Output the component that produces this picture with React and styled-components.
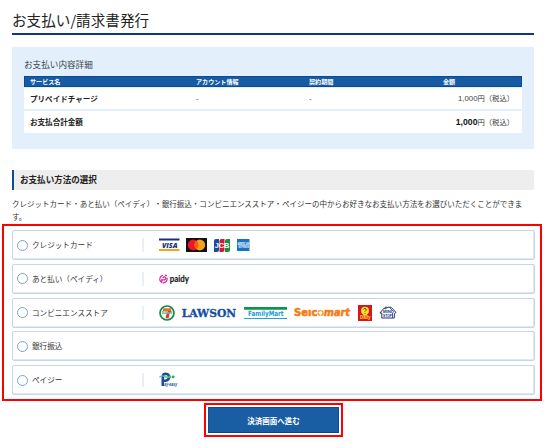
import React from "react";
import styled, { createGlobalStyle } from "styled-components";

const GlobalStyle = createGlobalStyle`
  * { box-sizing: border-box; }
  body {
    margin: 0;
    background: #fff;
    color: #333;
    font-family: "Noto Sans CJK JP", sans-serif;
    text-spacing-trim: space-all;
  }
`;

const Page = styled.main`
  width: 550px;
  height: 448px;
  overflow: hidden;
`;

const Content = styled.div`
  width: 522px;
  margin-left: 12px;
`;

const Title = styled.h1`
  margin: 0;
  height: 35px;
  padding-top: 9px;
  border-bottom: 2px solid #12348c;
  font-size: 14.6px;
  font-weight: 400;
  line-height: 21px;
  color: #222;
`;

const Detail = styled.section`
  height: 102px;
  margin-top: 12px;
  padding: 11px 12px 0;
  background: #e3effa;
`;

const DetailTitle = styled.h2`
  margin: 0 0 6px;
  font-size: 8.6px;
  font-weight: 400;
  line-height: 12px;
  color: #3c4650;
`;

const Row = styled.div`
  display: grid;
  grid-template-columns: 166px 113px 134px 1fr;
  align-items: center;
  width: 498px;
  height: ${(p) => p.$height}px;
  margin-bottom: ${(p) => p.$gap || 0}px;
  padding: 0 11px 0 6px;
  background: #fff;
  font-size: 7.55px;
  line-height: 12px;
`;

const HeadRow = styled(Row)`
  background: #175ca3;
  border: 1px solid #084a94;
  padding-left: 5px;
  color: #fff;
  font-size: 6.1px;
  font-weight: 700;
  line-height: 9px;
`;

const Name = styled.span`
  font-weight: 700;
  color: #222;
`;

const Amount = styled.span`
  grid-column: 4;
  margin-right: -3px;
  text-align: right;
  white-space: nowrap;
  font-size: 7.3px;
  font-family: "Liberation Sans", "Noto Sans CJK JP", sans-serif;
`;

const Figure = styled.span`
  font-size: ${(p) => (p.$strong ? 8.7 : 7.8)}px;
  font-weight: ${(p) => (p.$strong ? 700 : 400)};
  color: ${(p) => (p.$strong ? "#111" : "#444")};
`;

const SectionTitle = styled.h2`
  height: 20px;
  margin: 21px 0 8px;
  padding-left: 6px;
  border-left: 2px solid #0b4b98;
  background: #eee;
  font-size: 8.55px;
  font-weight: 700;
  line-height: 19px;
  color: #222;
`;

const Lead = styled.p`
  height: 26px;
  margin: 0;
  font-size: 7.53px;
  line-height: 12.5px;
  white-space: nowrap;
`;

const MethodFrame = styled.div`
  display: flex;
  flex-direction: column;
  gap: 3.75px;
  width: 540px;
  height: 177px;
  margin-left: 2px;
  padding: 4px 6px 0 8px;
  border: 2px solid #f00;
`;

const Method = styled.label`
  display: flex;
  flex: 0 0 30px;
  align-items: center;
  width: 522.5px;
  padding-left: 4px;
  border: 1px solid #c5d7e7;
  box-shadow: inset -1px -1px #dfe9f2;
  border-radius: 2px;
  font-size: 7.6px;
  line-height: 12px;
`;

const Radio = styled.input`
  appearance: none;
  flex: none;
  width: 11px;
  height: 11px;
  margin: 0 4px 0 0;
  border: 1px solid #7fa3c9;
  border-radius: 50%;
  background: #fff;
`;

const MethodName = styled.span`
  width: 110px;
`;

const Logos = styled.span`
  display: flex;
  align-items: center;
  height: 14px;
  padding-left: 14.5px;
  border-left: 2px solid #e8eff5;
`;

const Logo = styled.svg`
  display: block;
  flex: none;
  margin-right: ${(p) => p.$after || 0}px;
  overflow: visible;
`;

const SubmitFrame = styled.div`
  width: 139px;
  height: 34px;
  margin: 2px 0 0 204px;
  padding: 2px;
  border: 2px solid #f00;
`;

const Submit = styled.button`
  display: block;
  width: 131px;
  height: 26px;
  padding: 0;
  border: 1px solid #0b4f9b;
  border-bottom-color: #08458b;
  background: #195da3;
  color: #fff;
  font-family: inherit;
  font-size: 7.5px;
  font-weight: 700;
  line-height: 23px;
`;

const sans = "Liberation Sans, sans-serif";

const Visa = () => (
  <Logo $after={6} width="21" height="14">
    <path d="M0 .5h20.5v2H0z" fill="#1b2d7d" />
    <path d="M0 11h20.5v2H0z" fill="#f5a31a" />
    <text x="3" y="9.5" fontFamily="Open Sans, sans-serif" fontSize="7.4" fontWeight="800" fontStyle="italic" textLength="15.5" lengthAdjust="spacingAndGlyphs" fill="#1b2d7d">VISA</text>
  </Logo>
);

const Mastercard = () => (
  <Logo $after={7} width="21" height="14">
    <path d="M0 0h21v14H0z" fill="#10101b" />
    <circle cx="7.2" cy="7" r="5.4" fill="#eb1724" />
    <circle cx="13.8" cy="7" r="5.4" fill="#f5a01f" />
    <path d="M10.5 2.8a5.4 5.4 0 0 1 0 8.4a5.4 5.4 0 0 1 0-8.4z" fill="#f65c18" />
  </Logo>
);

const Jcb = () => (
  <Logo $after={7} width="16" height="13">
    <path d="M2 0h3v11q0 2-2 2H0V2Q0 0 2 0z" fill="#164f9e" />
    <path d="M7.5 0h3v11q0 2-2 2h-3V2q0-2 2-2z" fill="#cf1739" />
    <path d="M13 0h3v11q0 2-2 2h-3V2q0-2 2-2z" fill="#129143" />
    <text x=".7" y="9" fontFamily={sans} fontSize="7" fontWeight="700" textLength="14.7" lengthAdjust="spacingAndGlyphs" fill="#fff">JCB</text>
  </Logo>
);

const Amex = () => (
  <Logo width="12.5" height="12">
    <path d="M0 0h12.5v12H0z" fill="#1674c4" />
    <text x=".5" y="5.7" fontFamily={sans} fontSize="3" fontWeight="700" textLength="11.5" lengthAdjust="spacingAndGlyphs" fill="#fff">AMERICAN</text>
    <text x="1.5" y="8.8" fontFamily={sans} fontSize="3" fontWeight="700" textLength="10.5" lengthAdjust="spacingAndGlyphs" fill="#fff">EXPRESS</text>
  </Logo>
);

const Paidy = () => (
  <Logo width="31" height="12">
    <g fill="none" stroke="#e21aa0" strokeWidth="1.2" strokeLinecap="round">
      <path d="M3.4 2.4A4 4 0 0 0 1.6 8.6M4.3 9.9A4 4 0 0 0 8.1 5.2M2.8 9.7V6.9H5" />
      <path d="M4 4.6a1.5 1.5 0 1 1 1.6 2.2M6.5 2.1l1.1.6" />
    </g>
    <text x="10.7" y="8.8" fontFamily="Lato, sans-serif" fontSize="8.6" fontWeight="700" textLength="19.2" lengthAdjust="spacingAndGlyphs" fill="#15151c" stroke="#15151c" strokeWidth=".15">paidy</text>
  </Logo>
);

const SevenEleven = () => (
  <Logo $after={7} width="16" height="16">
    <circle cx="8" cy="8" r="7" fill="#fff" stroke="#16884a" strokeWidth="1.7" />
    <path d="M4 3.3h8.2v2.8H4z" fill="#f06b23" />
    <path d="M9.4 6.1h2.8Q9.8 9 9.6 13.2H6.6Q6.8 9 9.4 6.1z" fill="#e3322a" />
    <path d="M3 7.2h10v1.8H3z" fill="#fff" opacity=".65" />
    <text x="3" y="9" fontFamily={sans} fontSize="2.6" fontWeight="700" textLength="10" lengthAdjust="spacingAndGlyphs" fill="#16884a">ELEVEN</text>
  </Logo>
);

const Lawson = () => (
  <Logo $after={8.5} width="54" height="12">
    <text x="-.3" y="10.2" fontFamily="DejaVu Serif, serif" fontSize="11.8" fontWeight="700" textLength="54.5" lengthAdjust="spacingAndGlyphs" fill="#174fa2" stroke="#174fa2" strokeWidth=".35">LAWSON</text>
  </Logo>
);

const FamilyMart = () => (
  <Logo $after={6.5} width="43" height="12">
    <path d="M0 0h43v2.8H0z" fill="#109447" />
    <path d="M0 11h43v1H0z" fill="#20a6df" />
    <text x="4" y="9.3" fontFamily="DejaVu Sans, sans-serif" fontSize="7.2" fontWeight="700" textLength="35.5" lengthAdjust="spacingAndGlyphs" fill="#179cd9">FamilyMart</text>
  </Logo>
);

const Seicomart = () => (
  <Logo $after={8} width="56" height="12">
    <g fontFamily="DejaVu Sans, sans-serif" fontSize="10" fontWeight="700" fill="#f47b13" stroke="#f47b13" strokeWidth=".5">
      <text x="0" y="9.3" textLength="23.5" lengthAdjust="spacingAndGlyphs">Seıc</text>
      <text x="29.7" y="9.3" fontStyle="italic" textLength="26.3" lengthAdjust="spacingAndGlyphs">mart</text>
    </g>
    <circle cx="26.6" cy="6" r="2.5" fill="none" stroke="#f49a20" strokeWidth="1.4" strokeDasharray="3.5 .6" />
  </Logo>
);

const Daily = () => (
  <Logo $after={7} width="14" height="16">
    <path d="M0 0h14v16H0z" fill="#d9141f" />
    <circle cx="7" cy="5.7" r="4" fill="#ffe326" />
    <path d="M5.2 8h3.6v2.7H5.2z" fill="#ffe326" />
    <path d="M5.7 4.4Q6 3 7.3 3.4T8 5.4L7 6.5M7 7.9v.8" fill="none" stroke="#343421" strokeWidth="1" />
    <text x="2" y="13.9" fontFamily={sans} fontSize="4.7" fontWeight="700" textLength="10.4" lengthAdjust="spacingAndGlyphs" fill="#ffe326">Daily</text>
  </Logo>
);

const MiniStop = () => (
  <Logo width="18" height="13">
    <path d="M2.8 12V7H.9L5 2.2l1.2.9V1.2h1.5v1.2L9 1.2h3L17 6.4l-1.7 1.3V12z" fill="#fff" stroke="#203578" strokeWidth="1" strokeLinejoin="round" />
    <path d="M10.6 1.5 14.7 5.8 13.5 7v4.8" fill="none" stroke="#203578" strokeWidth=".8" />
    <text x="4" y="7.4" fontFamily={sans} fontSize="4.3" fontWeight="700" textLength="9" lengthAdjust="spacingAndGlyphs" fill="#203578">MINI</text>
    <text x="4" y="10.9" fontFamily={sans} fontSize="4.3" fontWeight="700" textLength="9" lengthAdjust="spacingAndGlyphs" fill="#203578">STOP</text>
  </Logo>
);

const PayEasy = () => (
  <Logo width="18" height="16">
    <path d="M3.8 14V4.4Q4 1.8 6.7 1.8Q10.2 2 10 5.2T6.4 8.8H5" fill="none" stroke="#174ca0" strokeWidth="2.6" />
    <path d="M.3 5.3Q3 2.8 5.3 4.5T10 4.9" fill="none" stroke="#58b9d8" strokeWidth="1.2" />
    <circle cx="7" cy="4.9" r="1.2" fill="#9ed53a" />
    <circle cx="10.9" cy="4.9" r="1.4" fill="#55b947" />
    <circle cx="14.2" cy="4.9" r="1.4" fill="#25ad59" />
    <text x="5.3" y="13.6" fontFamily={sans} fontSize="4.6" fontWeight="700" fontStyle="italic" textLength="12.8" lengthAdjust="spacingAndGlyphs" fill="#174ca0">ay-easy</text>
  </Logo>
);

const methods = [
  { name: "クレジットカード", logos: [Visa, Mastercard, Jcb, Amex] },
  { name: "あと払い（ペイディ）", logos: [Paidy] },
  { name: "コンビニエンスストア", logos: [SevenEleven, Lawson, FamilyMart, Seicomart, Daily, MiniStop] },
  { name: "銀行振込", logos: [] },
  { name: "ペイジー", logos: [PayEasy] },
];

export default function App() {
  return (
    <Page>
      <GlobalStyle />
      <Content>
        <Title>お支払い/請求書発行</Title>
        <Detail>
          <DetailTitle>お支払い内容詳細</DetailTitle>
          <HeadRow $height={11} $gap={1}>
            <span>サービス名</span>
            <span>アカウント情報</span>
            <span>契約期間</span>
            <span>金額</span>
          </HeadRow>
          <Row $height={21} $gap={2}>
            <Name>プリペイドチャージ</Name>
            <span>-</span>
            <span>-</span>
            <Amount><Figure>1,000</Figure>円（税込）</Amount>
          </Row>
          <Row $height={22}>
            <Name>お支払合計金額</Name>
            <Amount><Figure $strong>1,000</Figure>円（税込）</Amount>
          </Row>
        </Detail>
        <SectionTitle>お支払い方法の選択</SectionTitle>
        <Lead>
          クレジットカード・あと払い（ペイディ）・銀行振込・コンビニエンスストア・ペイジーの中からお好きなお支払い方法をお選びいただくことができま
          <br />
          す。
        </Lead>
      </Content>
      <MethodFrame>
        {methods.map(({ name, logos }) => (
          <Method key={name}>
            <Radio type="radio" name="method" />
            <MethodName>{name}</MethodName>
            {logos.length > 0 && (
              <Logos>
                {logos.map((Item, i) => <Item key={i} />)}
              </Logos>
            )}
          </Method>
        ))}
      </MethodFrame>
      <SubmitFrame>
        <Submit type="button">決済画面へ進む</Submit>
      </SubmitFrame>
    </Page>
  );
}
